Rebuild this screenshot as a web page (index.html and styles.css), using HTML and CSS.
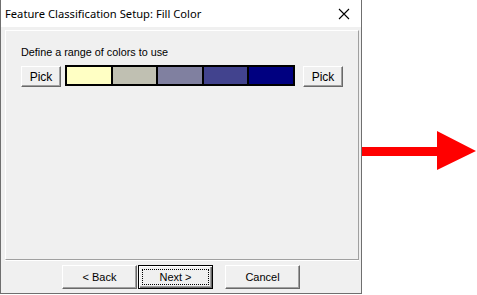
FILE: index.html
```html
<!DOCTYPE html>
<html>
<head>
    <meta charset="utf-8">
    <title>Feature Classification Setup: Fill Color</title>
    <link rel="stylesheet" href="styles.css">
</head>
<body>
<div class="screen">
    <div class="window">
        <div class="titlebar">
            <span class="title">Feature Classification Setup: Fill Color</span>
            <svg class="close" width="12" height="12" viewBox="0 0 12 12">
                <path d="M1 1 L11 11 M11 1 L1 11" stroke="#000" stroke-width="1.1" fill="none"/>
            </svg>
        </div>
        <div class="client">
            <div class="panel">
                <div class="label">Define a range of colors to use</div>
                <div class="range-row">
                    <button class="btn pick">Pick</button>
                    <div class="swatches">
                        <div class="swatch sw1"></div>
                        <div class="swatch sw2"></div>
                        <div class="swatch sw3"></div>
                        <div class="swatch sw4"></div>
                        <div class="swatch sw5"></div>
                    </div>
                    <button class="btn pick">Pick</button>
                </div>
            </div>
            <div class="buttons">
                <button class="btn wiz back">&lt; Back</button>
                <button class="btn wiz next"><span class="focus">Next &gt;</span></button>
                <button class="btn wiz cancel">Cancel</button>
            </div>
        </div>
    </div>
    <div class="arrow-area">
        <svg width="115" height="40" viewBox="0 0 115 40">
            <path d="M0 16 L75 16 L75 0 L114 20 L75 39 L75 25 L0 25 Z" fill="#ff0000"/>
        </svg>
    </div>
</div>
</body>
</html>
```

FILE: styles.css
```css
* {
    box-sizing: border-box;
}

body {
    margin: 0;
    background: #ffffff;
    font-family: "Liberation Sans", Arial, sans-serif;
}

.screen {
    display: flex;
    height: 295px;
}

.window {
    width: 362px;
    height: 294px;
    border: 1px solid #6f6f6f;
    border-top: none;
    display: flex;
    flex-direction: column;
}

.titlebar {
    height: 27px;
    flex-shrink: 0;
    background: #ffffff;
    display: flex;
    align-items: center;
    justify-content: space-between;
    padding: 0 11px 0 4px;
}

.title {
    font-family: "Noto Sans", sans-serif;
    font-size: 11.2px;
    color: #000000;
}

.client {
    flex: 1;
    background: #f0f0f0;
    padding: 3px 2px 0 4px;
    display: flex;
    flex-direction: column;
}

.panel {
    height: 230px;
    flex-shrink: 0;
    border: 1px solid;
    border-color: #ffffff #a0a0a0 #a0a0a0 #ffffff;
    box-shadow: 0 1px 0 #ffffff;
    padding: 15px 0 0 15px;
}

.label {
    font-size: 10.8px;
    height: 19px;
}

.range-row {
    display: flex;
    align-items: flex-start;
}

.btn {
    font-family: "Liberation Sans", Arial, sans-serif;
    background: #f0f0f0;
    color: #000000;
    border: 1px solid;
    border-color: #ffffff #696969 #696969 #ffffff;
    box-shadow: inset -1px -1px 0 #a0a0a0;
    padding: 0;
    margin: 0;
}

.pick {
    width: 40px;
    height: 21px;
    font-size: 12px;
    margin-top: 1px;
}

.swatches {
    width: 230px;
    height: 21px;
    background: #000000;
    padding: 2px;
    margin: 0 8px 0 4px;
    display: flex;
    gap: 2px;
}

.swatch {
    flex: 1;
}

.sw1 { background: #ffffc4; }
.sw2 { background: #c0c0b2; }
.sw3 { background: #8080a0; }
.sw4 { background: #42438e; }
.sw5 { background: #000080; }

.buttons {
    display: flex;
    justify-content: center;
    padding-top: 5px;
    padding-right: 2px;
}

.wiz {
    width: 75px;
    height: 24px;
    font-size: 11px;
}

.next {
    margin: 0 12px 0 1px;
    border: 1px solid #000000;
    box-shadow: inset 1px 1px 0 #ffffff, inset -1px -1px 0 #696969, inset -2px -2px 0 #a0a0a0;
    padding: 3px;
}

.focus {
    display: flex;
    align-items: center;
    justify-content: center;
    height: 100%;
    border: 1px dotted #000000;
}

.arrow-area {
    flex: 1;
    padding-top: 131px;
}

.arrow-area svg {
    display: block;
}
```
